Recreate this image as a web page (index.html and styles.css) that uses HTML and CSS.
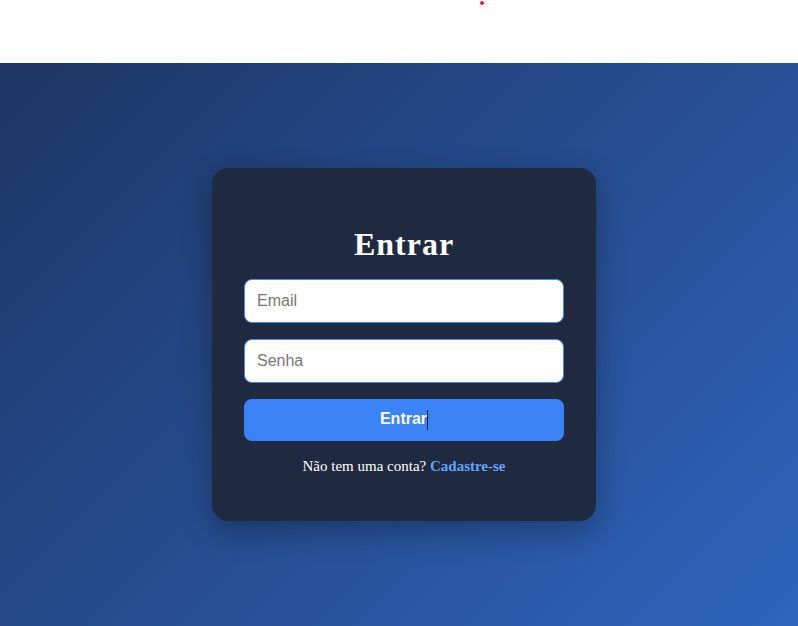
FILE: index.html
```html
<!DOCTYPE html>
<html lang="pt">
<head>
<meta charset="utf-8">
<title>Entrar</title>
<link rel="stylesheet" href="styles.css">
</head>
<body>
<header class="topbar"><span class="dot"></span></header>
<main class="hero">
  <div class="card">
    <h2 class="title">Entrar</h2>
    <input class="field" type="email" placeholder="Email">
    <input class="field" type="password" placeholder="Senha">
    <button class="btn">Entrar<span class="caret"></span></button>
    <p class="foot">Não tem uma conta? <a class="link" href="#">Cadastre-se</a></p>
  </div>
</main>
</body>
</html>
```
FILE: styles.css
```css
html, body { margin: 0; padding: 0; }
body { font-family: "Liberation Serif", "Times New Roman", serif; background: #fff; height: 626px; display: flex; flex-direction: column; }
.topbar { height: 63px; background: #fff; position: relative; flex: none; }
.dot { position: absolute; left: 480px; top: 1px; width: 4px; height: 4px; border-radius: 50%; background: #e11d2e; }
.hero { flex: 1; display: flex; align-items: center; justify-content: center; padding-left: 10px; background: linear-gradient(135deg, #1d3563 0%, #2e64bc 100%); }
.card { width: 320px; padding: 32px; background: #1f2a40; border-radius: 16px; box-shadow: 0 10px 30px rgba(0,0,0,0.3); display: flex; flex-direction: column; }
.title { margin: 26px 0 17px; font-size: 32px; line-height: 36px; letter-spacing: 1px; font-weight: bold; color: #fff; text-align: center; }
.field { box-sizing: border-box; height: 44px; margin: 0 0 16px; padding: 0 12px; border: 1px solid #4a8be8; border-radius: 8px; background: #fff; font-family: "Liberation Sans", Arial, sans-serif; font-size: 16px; color: #333; outline: none; }
.field::placeholder { color: #777; }
.btn { height: 42px; border: none; border-radius: 8px; background: #3b82f6; color: #fff; font-family: "Liberation Sans", Arial, sans-serif; font-size: 16px; font-weight: bold; position: relative; }
.caret { display: inline-block; width: 1px; height: 20px; background: #222; vertical-align: middle; margin-left: 0; }
.foot { margin: 16px 0 14px; text-align: center; color: #fff; font-size: 15px; line-height: 18px; }
.link { color: #60a5fa; font-weight: bold; text-decoration: none; }
```
